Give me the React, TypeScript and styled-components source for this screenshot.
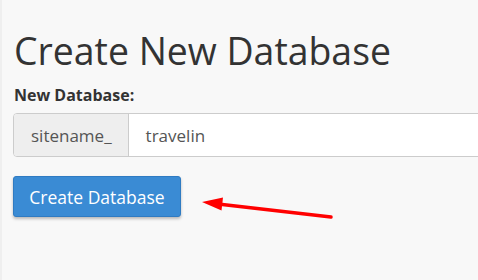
import styled, { createGlobalStyle } from 'styled-components';

const GlobalStyle = createGlobalStyle`
  html, body {
    margin: 0;
    padding: 0;
    background: #f8f8f8;
  }
  body {
    font-family: 'Open Sans', 'Noto Sans', sans-serif;
    color: #333;
  }
`;

const Page = styled.div`
  width: 478px;
  height: 280px;
  overflow: hidden;
  box-sizing: border-box;
  padding: 27px 0 0 11px;
  border-left: 2px solid #efefef;
`;

const Title = styled.h1`
  margin: 0 0 10px 1px;
  font-size: 37.4px;
  font-weight: 400;
  line-height: 48px;
  color: #333;
`;

const Label = styled.label`
  display: block;
  font-size: 16px;
  font-weight: 700;
  line-height: 20px;
  margin: 0 0 8px 1px;
`;

const InputGroup = styled.div`
  display: flex;
  height: 44px;
  width: 520px;
  box-sizing: border-box;
  border: 1px solid #ccc;
  border-radius: 4px;
  background: #fff;
  overflow: hidden;
`;

const Addon = styled.span`
  display: flex;
  align-items: center;
  padding: 0 16px 0 17px;
  background: #eee;
  border-right: 1px solid #ccc;
  font-size: 17px;
  color: #555;
`;

const Field = styled.span`
  display: flex;
  align-items: center;
  padding-left: 17px;
  font-size: 17px;
  color: #555;
`;

const ActionRow = styled.div`
  display: flex;
  align-items: flex-start;
  margin-top: 19px;
`;

const Button = styled.button`
  height: 41px;
  width: 168px;
  padding: 0;
  border: 1px solid #2f7bc2;
  border-radius: 3px;
  background: #3a8bd4;
  color: #fff;
  font-family: 'Open Sans', sans-serif;
  font-size: 17.5px;
  box-shadow: 0 2px 3px rgba(0, 0, 0, 0.25);
`;

const Arrow = styled.svg`
  display: block;
  margin: 20px 0 0 21px;
`;

export default function App() {
  return (
    <>
      <GlobalStyle />
      <Page>
        <Title>Create New Database</Title>
        <Label>New Database:</Label>
        <InputGroup>
          <Addon>sitename_</Addon>
          <Field>travelin</Field>
        </InputGroup>
        <ActionRow>
          <Button>Create Database</Button>
          <Arrow width="134" height="26" viewBox="0 0 134 26">
            <line x1="16" y1="8" x2="129" y2="21" stroke="#ff0000" strokeWidth="3.5" strokeLinecap="round" />
            <polygon points="0,6 21,1.5 19.5,14.5" fill="#ff0000" />
          </Arrow>
        </ActionRow>
      </Page>
    </>
  );
}
